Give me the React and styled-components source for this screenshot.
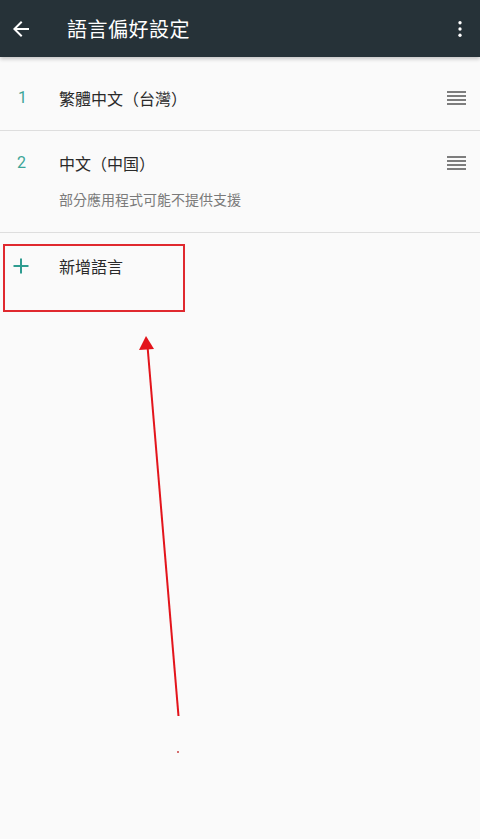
import React from "react";
import styled, { createGlobalStyle } from "styled-components";

const Global = createGlobalStyle`
  html, body { margin: 0; padding: 0; background: #fafafa; }
  body { font-family: Roboto, "Noto Sans CJK TC", "Noto Sans", sans-serif; }
  #root { min-height: 839px; }
`;

const Page = styled.div`
  position: relative;
  width: 480px;
  height: 839px;
  background: #fafafa;
  overflow: hidden;
`;

const Toolbar = styled.header`
  height: 57px;
  background: #263238;
  display: flex;
  align-items: center;
  padding: 0 10px 0 9px;
  box-sizing: border-box;
  box-shadow: 0 2px 4px rgba(0, 0, 0, 0.22);
  position: relative;
  z-index: 1;
`;

const IconBtn = styled.div`
  width: ${(p) => p.$w || "24px"};
  height: 24px;
  display: flex;
  align-items: center;
  justify-content: center;
  color: #fff;
`;

const Title = styled.h1`
  margin: 0 0 0 34px;
  flex: 1;
  font-family: Roboto, "Noto Sans CJK TC", sans-serif;
  font-weight: 400;
  font-size: 20px;
  color: #fff;
  letter-spacing: 0.5px;
`;

const List = styled.div`
  padding-top: 8px;
`;

const Row = styled.div`
  display: flex;
  align-items: flex-start;
  padding: ${(p) => p.$pad || "20px 14px 20px 0"};
  border-bottom: ${(p) => (p.$divider ? "1px solid #dedede" : "none")};
  position: relative;
`;

const Lead = styled.div`
  width: 59px;
  flex: none;
  display: flex;
  justify-content: flex-start;
  padding-left: ${(p) => p.$pl || "18px"};
  box-sizing: border-box;
  color: #3ba597;
  font-size: 16px;
  line-height: 26px;
  font-family: Roboto, sans-serif;
`;

const Body = styled.div`
  flex: 1;
  display: flex;
  flex-direction: column;
`;

const Label = styled.div`
  font-size: 16px;
  line-height: 26px;
  color: #2a2a2a;
  font-family: "Noto Sans CJK TC", sans-serif;
`;

const Sub = styled.div`
  margin-top: 13px;
  font-size: 14px;
  line-height: 20px;
  color: #7a7a7a;
  font-family: "Noto Sans CJK TC", sans-serif;
`;

const Handle = styled.div`
  width: 19px;
  height: 26px;
  display: flex;
  flex-direction: column;
  justify-content: center;
  gap: 2px;
  span {
    display: block;
    height: 2px;
    background: #7d7d7d;
  }
`;

const Highlight = styled.div`
  position: absolute;
  left: 3px;
  top: 11px;
  width: 178px;
  height: 64px;
  border: 2px solid #e0292f;
`;

const Overlay = styled.svg`
  position: absolute;
  left: 0;
  top: 0;
  pointer-events: none;
`;

const DragHandle = () => (
  <Handle>
    <span />
    <span />
    <span />
    <span />
  </Handle>
);

export default function App() {
  return (
    <>
      <Global />
      <Page>
        <Toolbar>
          <IconBtn>
            <svg width="24" height="24" viewBox="0 0 24 24" fill="#fff">
              <path d="M20 11H7.83l5.59-5.59L12 4l-8 8 8 8 1.41-1.41L7.83 13H20v-2z" />
            </svg>
          </IconBtn>
          <Title>語言偏好設定</Title>
          <IconBtn $w="20px">
            <svg width="20" height="20" viewBox="0 0 24 24" fill="#fff">
              <circle cx="12" cy="4.5" r="2" />
              <circle cx="12" cy="12" r="2" />
              <circle cx="12" cy="19.5" r="2" />
            </svg>
          </IconBtn>
        </Toolbar>
        <List>
          <Row $divider $pad="20px 14px 19px 0">
            <Lead>1</Lead>
            <Body>
              <Label>繁體中文（台灣）</Label>
            </Body>
            <DragHandle />
          </Row>
          <Row $divider $pad="19px 14px 23px 0">
            <Lead $pl="17px">2</Lead>
            <Body>
              <Label>中文（中国）</Label>
              <Sub>部分應用程式可能不提供支援</Sub>
            </Body>
            <DragHandle />
          </Row>
          <Row $pad="20px 14px 20px 0">
            <Lead $pl="12px">
              <svg width="18" height="26" viewBox="0 0 18 26">
                <path d="M9 5.5v15M1.5 13h15" stroke="#2e9c90" strokeWidth="2" />
              </svg>
            </Lead>
            <Body>
              <Label>新增語言</Label>
            </Body>
            <Highlight />
          </Row>
        </List>
        <Overlay width="480" height="839" viewBox="0 0 480 839">
          <line x1="178.5" y1="716" x2="147.5" y2="346" stroke="#e3141b" strokeWidth="2" />
          <polygon points="146,336 139,350 154,349" fill="#e3141b" />
          <circle cx="178" cy="752" r="1" fill="#c94040" />
        </Overlay>
      </Page>
    </>
  );
}
